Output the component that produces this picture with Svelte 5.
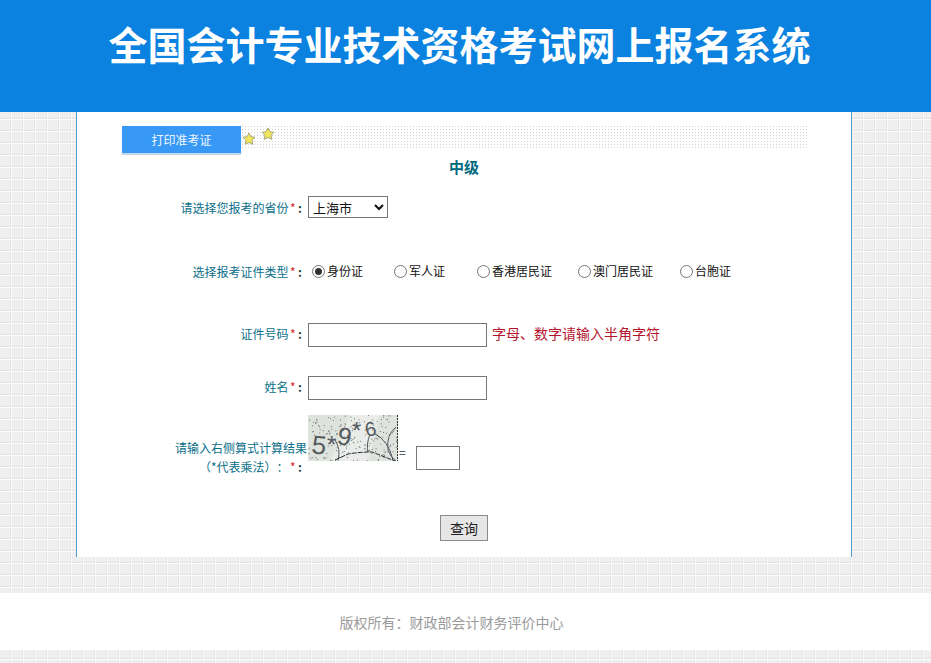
<script>
  const types = [
    { label: '身份证', gap: 31, checked: true },
    { label: '军人证', gap: 32 },
    { label: '香港居民证', gap: 26 },
    { label: '澳门居民证', gap: 27 },
    { label: '台胞证', gap: 0 }
  ];

  // Fixed-seed speckle for the captcha picture
  let seed = 17;
  const next = (max) => {
    seed = (seed * 1103515245 + 12345) % 2147483648;
    return (seed / 2147483648) * max;
  };
  const specks = Array.from({ length: 190 }, () => ({ x: next(90), y: next(46) }));
</script>

<div class="page">
  <header class="banner"><h1>全国会计专业技术资格考试网上报名系统</h1></header>

  <main class="sheet">
    <div class="tabbar">
      <div class="tab">打印准考证</div>
      <div class="dots">
        <svg class="star s1" viewBox="0 0 14 14" aria-hidden="true"><path d="M7 1l1.9 3.7 4.1.6-3 2.9.7 4.1L7 10.4l-3.7 1.9.7-4.1-3-2.9 4.1-.6z" fill="#f2e55c" stroke="#a8a878" stroke-width="1"/></svg>
        <svg class="star s2" viewBox="0 0 14 14" aria-hidden="true"><path d="M7 1l1.9 3.7 4.1.6-3 2.9.7 4.1L7 10.4l-3.7 1.9.7-4.1-3-2.9 4.1-.6z" fill="#f2e55c" stroke="#a8a878" stroke-width="1"/></svg>
      </div>
    </div>

    <h2>中级</h2>

    <div class="row province">
      <div class="label">请选择您报考的省份<span class="req">*</span><b>:</b></div>
      <select class="select"><option>上海市</option></select>
    </div>

    <div class="row idtype">
      <div class="label">选择报考证件类型<span class="req">*</span><b>:</b></div>
      <div class="radios">
        {#each types as t}
          <label class="radio" style="margin-right:{t.gap}px">
            <span class="dot" class:on={t.checked}></span>{t.label}
          </label>
        {/each}
      </div>
    </div>

    <div class="row idnum">
      <div class="label lift">证件号码<span class="req">*</span><b>:</b></div>
      <input class="field" type="text" />
      <span class="hint">字母、数字请输入半角字符</span>
    </div>

    <div class="row name">
      <div class="label lift">姓名<span class="req">*</span><b>:</b></div>
      <input class="field" type="text" />
    </div>

    <div class="row captcha">
      <div class="label two">
        <div class="wide">请输入右侧算式计算结果</div>
        <div>（*代表乘法）：<span class="req">*</span><b>:</b></div>
      </div>
      <svg class="code" viewBox="0 0 90 46" aria-label="验证码">
        <rect width="90" height="46" fill="#dfe3de"/>
        <path d="M22 46L42 0h30L60 46z" fill="#e9ece8"/>
        <g fill="#6f7370">
          {#each specks as s}
            <rect x={s.x} y={s.y} width="1" height="1"/>
          {/each}
        </g>
        <g font-family="'Liberation Sans', sans-serif" fill="#55595e">
          <text x="4" y="39" font-size="26" transform="rotate(6 10 30)">5</text>
          <text x="19" y="38" font-size="24">*</text>
          <text x="30" y="30" font-size="25" transform="rotate(10 36 20)">9</text>
          <text x="44" y="24" font-size="24">*</text>
          <text x="57" y="21" font-size="20" transform="rotate(-12 62 14)">6</text>
        </g>
        <g fill="none" stroke="#55595e" stroke-width="1">
          <path d="M27 25Q33 34 30 45"/>
          <path d="M62 19Q58 30 60 37"/>
          <path d="M67 19Q80 25 85 45"/>
          <path d="M88 12Q78 20 80 35Q82 42 89 47"/>
        </g>
        <path d="M27 45L40 39Q52 37 64 37L87 46" fill="none" stroke="#2a2d30" stroke-width="1" stroke-dasharray="5 1"/>
        <path d="M89.500 0V46" stroke="#333" stroke-dasharray="2 1"/>
      </svg>
      <span class="eq">=</span>
      <input class="answer" type="text" />
    </div>

    <div class="actions"><button class="btn">查询</button></div>
  </main>

  <div class="band"></div>

  <footer class="foot">版权所有：财政部会计财务评价中心</footer>
</div>

<style>
  :global(body) {
    margin: 0;
    background-color: #efefef;
    background-image:
      linear-gradient(to right, #fbfbfb 1px, transparent 1px),
      linear-gradient(to bottom, #fbfbfb 1px, transparent 1px),
      linear-gradient(to right, #e3e3e3 1px, transparent 1px),
      linear-gradient(to bottom, #e3e3e3 1px, transparent 1px);
    background-size: 12px 12px;
    background-position: 11px 11px, 11px 11px, 10px 10px, 10px 10px;
  }
  .page {
    height: 663px;
    overflow: hidden;
    font-family: "Noto Sans CJK SC", "Liberation Sans", sans-serif;
    font-size: 12px;
    text-spacing-trim: space-all;
  }
  .banner {
    height: 112px;
    background: #0b82e0;
    display: flex;
    justify-content: center;
    padding-top: 19px;
    box-sizing: border-box;
  }
  h1 {
    margin: 0 0 0 -12px;
    color: #fff;
    font-size: 39px;
    line-height: 48px;
    font-weight: 700;
  }
  .sheet {
    box-sizing: border-box;
    width: 776px;
    height: 445px;
    margin-left: 76px;
    background: #fff;
    border-left: 1px solid #4f9fd0;
    border-right: 1px solid #4f9fd0;
  }
  .tabbar {
    display: flex;
    padding: 13px 44px 0 45px;
    height: 28px;
  }
  .tab {
    width: 119px;
    height: 27px;
    margin-top: 1px;
    background: #3798f5;
    box-shadow: 0 2px 1px #c4d8ea;
    color: #eef6ff;
    font-size: 12px;
    line-height: 27px;
    text-align: center;
  }
  .dots {
    flex: 1;
    position: relative;
    height: 24px;
    background-image: radial-gradient(circle, #d2d2d2 0.7px, transparent 0.9px);
    background-size: 3px 3px;
  }
  .star { position: absolute; width: 14px; height: 14px; }
  .s1 { left: 1px; top: 7px; }
  .s2 { left: 20px; top: 2px; }
  h2 {
    margin: 4px 0 0;
    text-align: center;
    color: #006a80;
    font-size: 15px;
    line-height: 20px;
    font-weight: 700;
  }
  .row {
    display: flex;
    align-items: center;
  }
  .label {
    box-sizing: border-box;
    width: 231px;
    padding-right: 6px;
    text-align: right;
    color: #0b6f8a;
    font-size: 12px;
    line-height: 19px;
    flex: none;
  }
  .label b { color: #1c3d46; font-weight: 700; margin-left: 1px; }
  .lift { margin-bottom: 3px; }
  .req { color: #d9222a; margin: 0 1.5px; }
  .province { margin-top: 19px; height: 22px; }
  .select {
    width: 80px;
    height: 22px;
    font-family: inherit;
    font-size: 13px;
    color: #111;
    background: #fff;
    border: 1px solid #767676;
    border-radius: 0;
    padding: 0;
    margin: 0;
  }
  .idtype { margin-top: 42px; height: 22px; }
  .radios { display: flex; padding-left: 4px; }
  .radio {
    display: flex;
    align-items: center;
    color: #111;
    font-size: 12px;
    line-height: 16px;
  }
  .dot {
    width: 11px;
    height: 11px;
    border: 1px solid #767676;
    border-radius: 50%;
    margin-right: 2px;
    position: relative;
    background: #fff;
  }
  .dot.on::after {
    content: "";
    position: absolute;
    inset: 2px;
    border-radius: 50%;
    background: #333;
  }
  .idnum { margin-top: 41px; height: 24px; }
  .field {
    box-sizing: border-box;
    width: 179px;
    height: 24px;
    border: 1px solid #767676;
    padding: 0;
    margin: 0;
    background: #fff;
  }
  .hint {
    color: #b4142c;
    font-size: 14px;
    margin: 0 0 5px 5px;
  }
  .name { margin-top: 29px; height: 24px; }
  .captcha { margin-top: 15px; height: 58px; align-items: flex-start; }
  .two { margin-top: 23px; }
  .wide { margin-right: -5px; }
  .code { width: 90px; height: 46px; flex: none; }
  .eq { color: #333; font-size: 12px; margin: 29px 0 0 1px; line-height: 16px; }
  .answer {
    box-sizing: border-box;
    width: 44px;
    height: 24px;
    border: 1px solid #767676;
    margin: 31px 0 0 10px;
    padding: 0;
    background: #fff;
  }
  .actions { display: flex; margin-top: 42px; padding-left: 363px; }
  .btn {
    width: 48px;
    height: 26px;
    padding: 0;
    font-family: inherit;
    font-size: 14px;
    color: #222;
    background: #e6e6e6;
    border: 1px solid #8a8a8a;
  }
  .band { height: 36px; }
  .foot {
    box-sizing: border-box;
    height: 57px;
    padding-right: 28px;
    background: #fff;
    color: #9a9a9a;
    font-size: 14px;
    line-height: 59px;
    text-align: center;
  }
</style>
